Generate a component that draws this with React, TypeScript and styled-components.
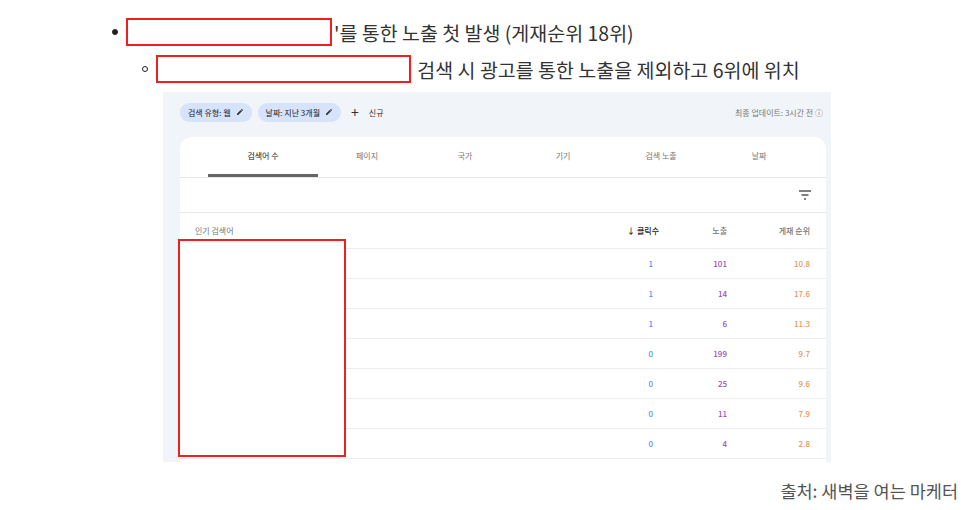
import React from 'react';
import styled, {createGlobalStyle} from 'styled-components';

const Global = createGlobalStyle`
  body { margin: 0; background: #fff; font-family: "Noto Sans CJK KR", "Noto Sans", sans-serif; }
`;

const Page = styled.div`
  width: 976px;
  height: 510px;
  position: relative;
  overflow: hidden;
`;

const Line = styled.div<{indent: number; top: number}>`
  display: flex;
  align-items: center;
  padding-left: ${p => p.indent}px;
  margin-top: ${p => p.top}px;
  height: 30px;
  font-size: 19.5px;
  color: #333;
  white-space: nowrap;
`;

const Dot = styled.span<{hollow?: boolean}>`
  width: 6px;
  height: 6px;
  border-radius: 50%;
  box-sizing: border-box;
  background: ${p => (p.hollow ? 'transparent' : '#222')};
  border: 1.5px solid #222;
  margin-right: 8px;
`;

const RedBox = styled.span<{w: number}>`
  display: inline-block;
  width: ${p => p.w}px;
  height: 28px;
  border: 2px solid #f02020;
  box-sizing: border-box;
  margin-right: 2px;
`;

const Shot = styled.div`
  margin: 8px 0 0 163px;
  width: 668px;
  height: 370px;
  background: #f1f4f9;
  padding: 0 5px 0 17px;
  box-sizing: border-box;
  display: flex;
  flex-direction: column;
  overflow: hidden;
  position: relative;
`;

const TopBar = styled.div`
  display: flex;
  align-items: center;
  height: 40px;
  gap: 6px;
  font-size: 8px;
  color: #333;
`;

const Chip = styled.span`
  background: #d7e3fb;
  border-radius: 10px;
  padding: 4px 8px;
  font-size: 8px;
  color: #202124;
  display: flex;
  align-items: center;
  gap: 5px;
`;

const Plus = styled.span`
  font-size: 14px;
  margin: 0 4px;
`;

const Updated = styled.span`
  margin-left: auto;
  color: #777;
  margin-right: 3px;
`;

const Card = styled.div`
  margin-top: 5px;
  background: #fff;
  border-radius: 12px 12px 0 0;
  flex: 1;
  display: flex;
  flex-direction: column;
`;

const Tabs = styled.div`
  display: grid;
  grid-template-columns: 110px repeat(5, 98px);
  padding-left: 28px;
  border-bottom: 1px solid #e6e6e6;
`;

const Tab = styled.div<{active?: boolean}>`
  height: 40px;
  display: flex;
  align-items: center;
  justify-content: center;
  font-size: 8px;
  color: ${p => (p.active ? '#222' : '#777')};
  border-bottom: 3px solid ${p => (p.active ? '#666' : 'transparent')};
  box-sizing: border-box;
`;

const FilterRow = styled.div`
  height: 34px;
  display: flex;
  align-items: center;
  justify-content: flex-end;
  padding-right: 15px;
  border-bottom: 1px solid #e6e6e6;
`;

const Row = styled.div<{head?: boolean}>`
  display: grid;
  grid-template-columns: 1fr 80px 68px 83px;
  height: ${p => (p.head ? 36 : 30)}px;
  box-sizing: border-box;
  align-items: center;
  border-bottom: 1px solid #eee;
  font-size: 8px;
  padding: 0 16px 0 15px;
  color: #777;
`;

const Num = styled.span<{c: string; pad?: number}>`
  text-align: right;
  color: ${p => p.c};
  font-weight: 500;
  padding-right: ${p => p.pad || 0}px;
`;

const Mask = styled.div`
  position: absolute;
  left: 15px;
  top: 147px;
  width: 168px;
  height: 218px;
  border: 2px solid #f02020;
  box-sizing: border-box;
  background: #fff;
`;

const Source = styled.div`
  position: absolute;
  right: 18px;
  top: 478px;
  font-size: 17.5px;
  color: #555;
`;

const Pencil = () => (
  <svg width="8" height="8" viewBox="0 0 24 24"><path d="M3 17.25V21h3.75L17.8 9.94l-3.75-3.75L3 17.25zM20.7 7.04a1 1 0 0 0 0-1.41l-2.34-2.34a1 1 0 0 0-1.41 0l-1.83 1.83 3.75 3.75 1.83-1.83z" fill="#333"/></svg>
);

const data = [
  ['1', '101', '10.8'], ['1', '14', '17.6'], ['1', '6', '11.3'], ['0', '199', '9.7'],
  ['0', '25', '9.6'], ['0', '11', '7.9'], ['0', '4', '2.8'],
];

export default function App() {
  return (
    <Page>
      <Global/>
      <Line indent={112} top={17}><Dot/><RedBox w={206}/>'를 통한 노출 첫 발생 (게재순위 18위)</Line>
      <Line indent={142} top={7}><Dot hollow/><RedBox w={255}/>&nbsp;검색 시 광고를 통한 노출을 제외하고 6위에 위치</Line>
      <Shot>
        <TopBar>
          <Chip>검색 유형: 웹 <Pencil/></Chip>
          <Chip>날짜: 지난 3개월 <Pencil/></Chip>
          <Plus>+</Plus><span>신규</span>
          <Updated>최종 업데이트: 3시간 전 ⓘ</Updated>
        </TopBar>
        <Card>
          <Tabs>
            <Tab active>검색어 수</Tab><Tab>페이지</Tab><Tab>국가</Tab>
            <Tab>기기</Tab><Tab>검색 노출</Tab><Tab>날짜</Tab>
          </Tabs>
          <FilterRow>
            <svg width="12" height="10" viewBox="0 0 12 10"><path d="M0 1h12M2.5 5h7M5 9h2" stroke="#555" strokeWidth="1.4"/></svg>
          </FilterRow>
          <Row head>
            <span>인기 검색어</span>
            <Num c="#222">↓ 클릭수</Num><Num c="#777">노출</Num><Num c="#777">게재 순위</Num>
          </Row>
          {data.map((d, i) => (
            <Row key={i}>
              <span/>
              <Num c="#5b8def" pad={6}>{d[0]}</Num><Num c="#9b4fc0">{d[1]}</Num><Num c="#e29a5a">{d[2]}</Num>
            </Row>
          ))}
        </Card>
        <Mask/>
      </Shot>
      <Source>출처: 새벽을 여는 마케터</Source>
    </Page>
  );
}
